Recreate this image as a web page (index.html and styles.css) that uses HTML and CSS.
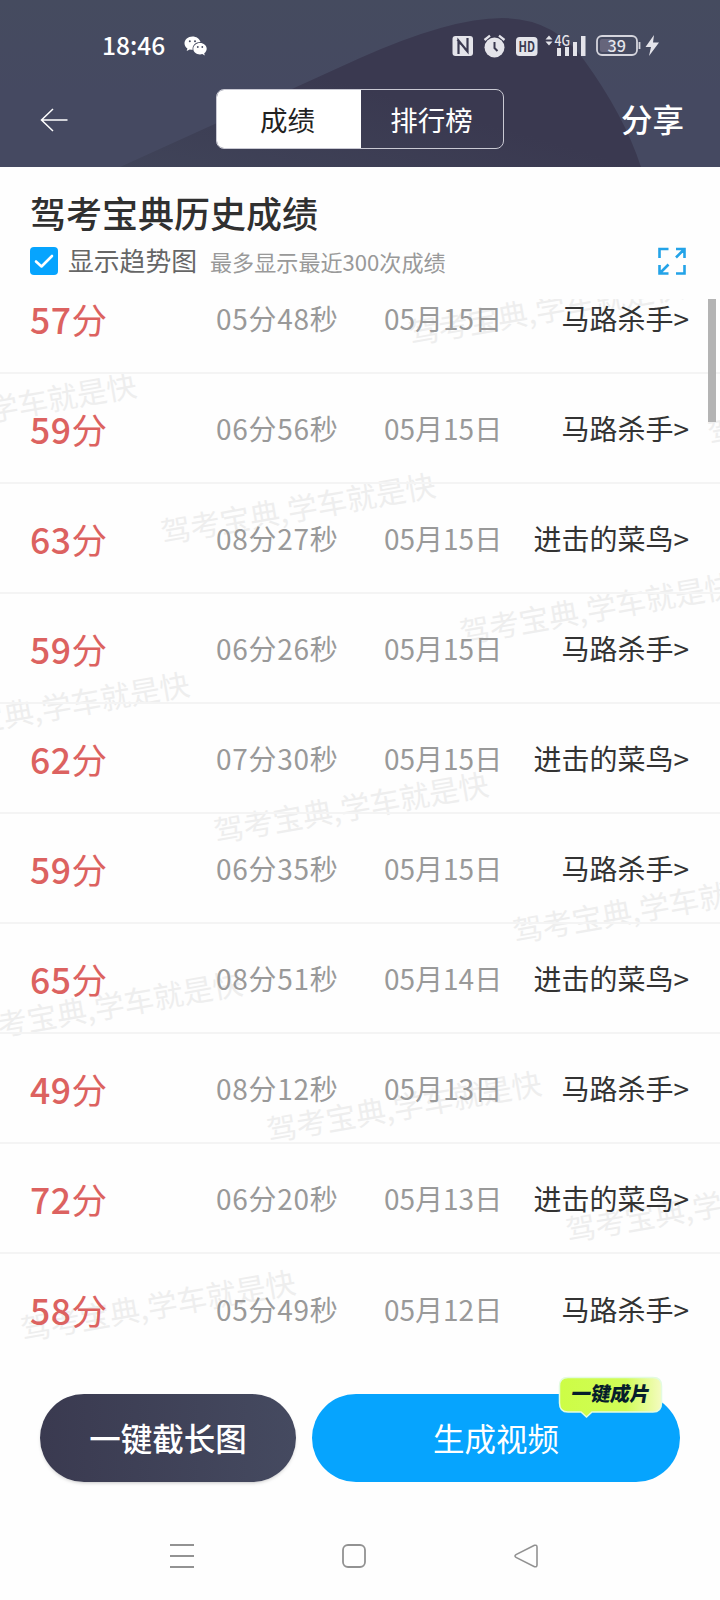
FILE: index.html
```html
<!DOCTYPE html>
<html lang="zh-CN">
<head>
<meta charset="utf-8">
<title>驾考宝典历史成绩</title>
<link rel="stylesheet" href="styles.css">
</head>
<body>
<header class="header">
  <svg class="header-bg" viewBox="0 0 720 167" preserveAspectRatio="none">
    <defs>
      <linearGradient id="hill" x1="0" y1="1" x2="0.5" y2="0.5"><stop offset="0" stop-color="#404459"/><stop offset="1" stop-color="#3a3950"/></linearGradient>
    </defs>
    <path d="M120 167 L360 58 Q450 18 502 18 Q554 18 584 60 Q624 115 641 167 Z" fill="url(#hill)"/>
  </svg>
  <div class="status">
    <div class="status-left">
      <span class="clock">18:46</span>
      <svg width="24" height="20" viewBox="0 0 24 20">
        <path d="M8.500.500C4 .500.500 3.500.500 7.300c0 2.200 1.100 4 2.900 5.200L2.700 15l3-1.500c1 .200 2 .300 3 .300C8 9.500 11.500 6 16.500 6 15.500 2.700 12.300.500 8.500.500Z" fill="#fff"/>
        <path d="M16 7c-3.700 0-6.700 2.500-6.700 5.700s3 5.700 6.700 5.700c.800 0 1.600-.100 2.300-.300l2.500 1.400-.600-2.300c1.500-1 2.500-2.700 2.500-4.500C22.700 9.500 19.700 7 16 7Z" fill="#fff"/>
        <g fill="#454a61"><circle cx="5.800" cy="5.200" r="1"/><circle cx="11" cy="5.200" r="1"/><circle cx="13.800" cy="11" r=".9"/><circle cx="18.300" cy="11" r=".9"/></g>
      </svg>
    </div>
    <svg class="status-right" width="210" height="26" viewBox="450 33 210 26">
      <rect x="452.500" y="36" width="20.500" height="20" rx="3" fill="#e4e4ea"/>
      <path d="M458.500 54V40.500L467.500 51.500V38M457.500 39.500L461 44M468 52L464.500 48" fill="none" stroke="#3a3950" stroke-width="2.200"/>
      <circle cx="494.500" cy="47.500" r="10" fill="#e4e4ea"/>
      <path d="M484.500 40L490 35.700M499 35.700L504.500 40" stroke="#e4e4ea" stroke-width="2.300"/>
      <path d="M494.500 42v6l3 3" fill="none" stroke="#3a3950" stroke-width="2"/>
      <rect x="516" y="37" width="21.500" height="19" rx="3.500" fill="#e4e4ea"/>
      <text x="518.500" y="51.700" class="hd" textLength="16.500" lengthAdjust="spacingAndGlyphs">HD</text>
      <path d="M545.500 39.500l3.500-4 3.500 4zM545.500 41.500l3.500 4 3.500-4z" fill="#e4e4ea"/>
      <text x="554.500" y="45.500" class="net" textLength="15.500" lengthAdjust="spacingAndGlyphs">4G</text>
      <path d="M557 48h4v8h-4zM565 47h4v9h-4zM573 42h4v14h-4zM581 36h4.500v20H581z" fill="#e4e4ea"/>
      <rect x="600" y="39" width="13" height="13" rx="2" fill="#66657b"/>
      <rect x="597" y="36" width="40" height="19" rx="5" fill="none" stroke="#d5d5dd" stroke-width="1.800"/>
      <path d="M639.500 42v7" stroke="#d5d5dd" stroke-width="1.800"/>
      <text x="607.500" y="51.500" class="batt" textLength="18.500" lengthAdjust="spacingAndGlyphs">39</text>
      <path d="M654 35L645.500 47h5.500L649 56l10-13.500h-6z" fill="#e4e4ea"/>
    </svg>
  </div>
  <nav class="nav">
    <svg class="back" width="28" height="24" viewBox="0 0 28 24"><path d="M27.500 12H1.500M13 1L1.500 12L13 23" fill="none" stroke="#fff" stroke-width="1.500"/></svg>
    <div class="tabs"><span class="tab tab-on">成绩</span><span class="tab">排行榜</span></div>
    <span class="share">分享</span>
  </nav>
</header>

<section class="intro">
  <h1 class="title">驾考宝典历史成绩</h1>
  <div class="options">
    <svg width="28" height="28" viewBox="0 0 28 28"><rect width="28" height="28" rx="4" fill="#06a4fe"/><path d="M6 14.500L11.500 19.500L22 9" fill="none" stroke="#fff" stroke-width="2.600" stroke-linecap="round" stroke-linejoin="round"/></svg>
    <span class="opt-label">显示趋势图</span>
    <span class="opt-hint">最多显示最近300次成绩</span>
    <svg class="expand" width="28" height="28" viewBox="0 0 28 28" fill="none" stroke="#23a3e8" stroke-width="2.600"><path d="M1.500 11V2h9M18 2h8.500v9M26.500 2L18 10.500M1.500 18v8.500h9M1.500 26.500L10.500 17.500M26.500 18v8.500h-8.500"/></svg>
  </div>
</section>

<main class="list">
  <svg class="marks" width="720" height="1060" viewBox="0 299 720 1060"></svg>
  <div class="rows"></div>
  <i class="scrollbar"></i>
</main>

<footer class="actions">
  <div class="btn btn-dark">一键截长图</div>
  <div class="btn btn-blue">生成视频
    <div class="badge">
      <svg class="badge-bg" width="106" height="43" viewBox="0 0 106 43">
        <defs><linearGradient id="lime"><stop offset="0" stop-color="#cdfd45"/><stop offset=".65" stop-color="#d0fc58"/><stop offset="1" stop-color="#f4fbc0"/></linearGradient></defs>
        <path d="M10 1.500H95Q103.500 1.500 103.500 10V27Q103.500 36 95 36H34L28.500 41L23 36H10Q1.500 36 1.500 27V10Q1.500 1.500 10 1.500Z" fill="url(#lime)" stroke="#e3fbe0" stroke-width="1.500"/>
      </svg>
      <span class="badge-text">一键成片</span>
    </div>
  </div>
</footer>

<div class="sysnav">
  <svg width="24" height="24" viewBox="0 0 24 24"><path d="M0 1h24M0 12h24M0 23h24" stroke="#929292" stroke-width="1.800"/></svg>
  <svg width="24" height="24" viewBox="0 0 24 24"><rect x="1" y="1" width="22" height="22" rx="5" fill="none" stroke="#929292" stroke-width="1.800"/></svg>
  <svg width="24" height="24" viewBox="0 0 24 24"><path d="M20.500 1.300L2 10.600Q0 12 2 13.400L20.500 22.700Q23 23.300 23 21V3Q23 .700 20.500 1.300Z" fill="none" stroke="#929292" stroke-width="1.600"/></svg>
</div>
<script src="main.js"></script>
</body>
</html>
```
FILE: styles.css
```css
* { box-sizing: border-box; }
body {
  margin: 0;
  width: 720px;
  height: 1600px;
  overflow: hidden;
  display: flex;
  flex-direction: column;
  background: #fefefe;
  font-family: "Noto Sans CJK SC", sans-serif;
  color: #333;
}
svg { display: block; flex: none; }
.header {
  position: relative;
  height: 167px;
  flex: none;
  background: linear-gradient(#454b5f, #454961 55%);
  color: #fff;
}
.header-bg { position: absolute; inset: 0; width: 720px; height: 167px; }
.status {
  position: relative;
  height: 90px;
  padding: 2px 60px 0 102px;
  display: flex;
  align-items: center;
  justify-content: space-between;
}
.status-left { display: flex; align-items: center; gap: 20px; }
.clock { font: 500 24.500px/32px "Noto Sans CJK SC", sans-serif; width: 62px; white-space: nowrap; margin-top: -2px; }
.hd { font: 700 14.500px "Noto Sans CJK SC", sans-serif; fill: #3a3950; }
.net { font: 500 14px "Noto Sans CJK SC", sans-serif; fill: #e4e4ea; }
.batt { font: 500 15.500px "Noto Sans CJK SC", sans-serif; fill: #e4e4ea; }
.nav {
  position: relative;
  display: grid;
  grid-template-columns: 216px 288px 1fr;
  align-items: center;
  height: 60px;
  margin-top: -1px;
}
.back { margin-left: 40px; margin-top: 1px; }
.tabs {
  display: grid;
  grid-template-columns: 144px 1fr;
  height: 60px;
  border: 1.500px solid #c9c9d3;
  border-radius: 8px;
  overflow: hidden;
}
.tab { font-size: 27.500px; line-height: 58px; text-align: center; padding-right: 1px; }
.tab-on { background: #fff; color: #222; padding-right: 3px; }
.share { font-weight: 500; font-size: 31.500px; justify-self: end; margin: -2px 36px 0 0; }
.intro { height: 132px; flex: none; padding: 19px 34px 0 30px; }
.title { margin: 0; font-size: 36px; line-height: 52px; font-weight: 500; color: #303030; }
.options { display: flex; align-items: center; height: 46px; }
.opt-label { font-size: 25.800px; color: #666; margin: -3px 0 0 10px; }
.opt-hint { font-size: 22.100px; color: #999; margin: -1px 0 0 13px; }
.expand { margin-left: auto; }
.list { position: relative; height: 1060px; flex: none; overflow: hidden; }
.marks { position: absolute; inset: 0; }
.mark { font: 400 30px "Noto Sans CJK SC", sans-serif; fill: #eeeeee; }
.rows { position: relative; margin-top: -35px; }
.row {
  display: grid;
  grid-template-columns: 186px 122px 46px 114px 1fr;
  align-items: center;
  height: 110px;
  padding: 0 31px 0 30px;
  border-bottom: 2px solid #f4f4f4;
  font-size: 28px;
  white-space: nowrap;
}
.row:last-child { border-bottom: 0; }
.score { font-size: 35.500px; letter-spacing: 0.500px; color: #dc6260; }
.score b { font-weight: 500; }
.time, .date { color: #999; text-align: center; }
.time { font-size: 28px; letter-spacing: 0.700px; }
.date { grid-column: 4; }
.rank { text-align: right; }
.scrollbar { position: absolute; right: 4px; top: 0; width: 8px; height: 123px; background: #b4b4b4; }
.actions { height: 123px; flex: none; display: flex; gap: 16px; padding: 35px 40px 0; }
.btn {
  position: relative;
  height: 88px;
  border-radius: 44px;
  color: #fff;
  font-size: 31.500px;
  line-height: 86px;
  text-align: center;
}
.btn-dark { width: 256px; font-weight: 500; background: linear-gradient(90deg, #3a3a50, #454a60); box-shadow: 0 2px 4px -2px #aaa; }
.btn-blue { width: 368px; background: #06a4fe; }
.badge { position: absolute; left: 246px; top: -18px; width: 106px; height: 43px; }
.badge-bg { position: absolute; inset: 0; }
.badge-text {
  position: relative;
  display: block;
  color: #061d2b;
  font-size: 19.700px;
  font-weight: 900;
  line-height: 34px;
  transform: skewX(-10deg);
}
.sysnav { display: flex; justify-content: space-between; padding: 62px 182px 0 170px; }
```
FILE: main.js
```js
const records = [
  [57, "05分48秒", "05月15日", "马路杀手"],
  [59, "06分56秒", "05月15日", "马路杀手"],
  [63, "08分27秒", "05月15日", "进击的菜鸟"],
  [59, "06分26秒", "05月15日", "马路杀手"],
  [62, "07分30秒", "05月15日", "进击的菜鸟"],
  [59, "06分35秒", "05月15日", "马路杀手"],
  [65, "08分51秒", "05月14日", "进击的菜鸟"],
  [49, "08分12秒", "05月13日", "马路杀手"],
  [72, "06分20秒", "05月13日", "进击的菜鸟"],
  [58, "05分49秒", "05月12日", "马路杀手"],
];
document.querySelector(".rows").innerHTML = records.map(([score, time, date, rank]) =>
  `<div class="row"><span class="score"><b>${score}</b>分</span><span class="time">${time}</span><span class="date">${date}</span><span class="rank">${rank}&gt;</span></div>`
).join("");

// Watermark origins, laid out on a skewed lattice.
const origins = [
  [411, 345], [710, 445], [-136, 444], [163, 544], [462, 644], [-83, 743],
  [216, 843], [515, 943], [-30, 1042], [269, 1142], [568, 1242], [23, 1341],
];
document.querySelector(".marks").innerHTML = origins.map(([x, y]) =>
  `<text class="mark" transform="translate(${x} ${y}) rotate(-10)">驾考宝典,学车就是快</text>`
).join("");
```
